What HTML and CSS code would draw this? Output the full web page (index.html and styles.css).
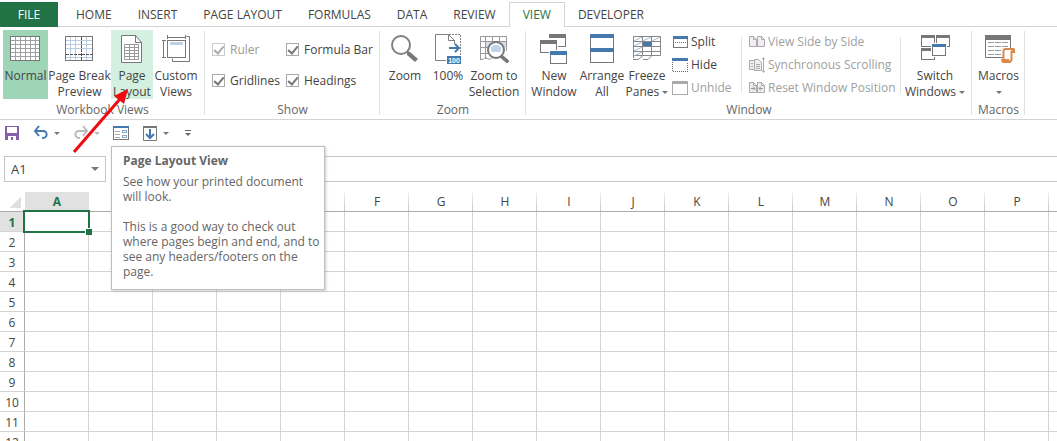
FILE: index.html
```html
<!DOCTYPE html>
<html lang="en">
<head>
	<meta charset="utf-8">
	<title>Book1 - Excel</title>
	<link rel="stylesheet" href="styles.css">
</head>
<body>
	<nav class="tabs">
		<a class="tab file" href="#">FILE</a>
		<a class="tab" href="#">HOME</a>
		<a class="tab" href="#">INSERT</a>
		<a class="tab" href="#">PAGE LAYOUT</a>
		<a class="tab" href="#">FORMULAS</a>
		<a class="tab" href="#">DATA</a>
		<a class="tab" href="#">REVIEW</a>
		<a class="tab active" href="#">VIEW</a>
		<a class="tab" href="#">DEVELOPER</a>
	</nav>

	<div class="ribbon">
		<section class="group views">
			<div class="tools">
				<button class="big selected"><svg width="33" height="32" viewBox="0 0 33 32" shape-rendering="crispEdges"><rect x="1" y="2" width="30" height="25" fill="#fff"/><path d="M6.500 3v23M11.500 3v23M16.500 3v23M21.500 3v23M26.500 3v23M2 6.500h28M2 10.500h28M2 14.500h28M2 18.500h28M2 22.500h28" stroke="#a0a0a0"/><rect x="1.500" y="2.500" width="29" height="24" fill="none" stroke="#777"/></svg>
					<span>Normal</span></button>
				<button class="big w-l"><svg width="31" height="32" viewBox="0 0 31 32" shape-rendering="crispEdges"><path d="M6.500 3v23M11.500 3v23M22.500 3v23M2 6.500h26M2 10.500h26M2 14.500h26M2 23.500h26" stroke="#b9cde0"/><rect x="1.500" y="2.500" width="27" height="24" fill="none" stroke="#777"/><path d="M17.500 3v24M2 20.500h27" stroke="#555" stroke-dasharray="3 1"/></svg>
					<span>Page Break<br>Preview</span></button>
				<button class="big hover w-s"><svg width="32" height="32" viewBox="0 0 32 32"><path d="M5.500 1.500h14l6 7v20h-20z" fill="#fff" stroke="#777"/><path d="M19.500 1.500v7h6" fill="none" stroke="#777"/><path d="M8.500 10.500h14v15h-14zM13.500 10.500v15M18.500 10.500v15M8.500 13.500h14M8.500 16.500h14M8.500 19.500h14M8.500 22.500h14" fill="none" stroke="#999"/></svg>
					<span>Page<br>Layout</span></button>
				<button class="big w-s"><svg width="32" height="32" viewBox="0 0 32 32"><g fill="none" stroke="#777"><rect x="7.500" y="6.500" width="18" height="17"/><path d="M7.500 1v4M25.500 1v4M7.500 3.500h18M2 6.500h4M2 23.500h4M3.500 6.500v17M26.500 2.500h3v25h-17v-3"/></g><path d="M10 8h13v3H10z" fill="#bdd0e6"/></svg>
					<span>Custom<br>Views</span></button>
			</div>
			<h2>Workbook Views</h2>
		</section>

		<section class="group show">
			<div class="tools checks">
				<label class="off"><input type="checkbox" checked disabled>Ruler</label>
				<label><input type="checkbox" checked>Formula Bar</label>
				<label><input type="checkbox" checked>Gridlines</label>
				<label><input type="checkbox" checked>Headings</label>
			</div>
			<h2>Show</h2>
		</section>

		<section class="group zoom">
			<div class="tools">
				<button class="big w-s"><svg width="32" height="32" viewBox="0 0 32 32"><circle cx="12" cy="11" r="9" fill="none" stroke="#808080" stroke-width="2"/><path d="M18 17l3 1 8 7-3 3-8-7z" fill="#777"/></svg>
					<span>Zoom</span></button>
				<button class="big w-s"><svg width="32" height="32" viewBox="0 0 32 32"><path d="M14 26.500H3.500V.5h13l6 6h-6v-6M22.500 6v4" fill="none" stroke="#808080"/><path d="M17 .5h11.500V22" fill="none" stroke="#808080" stroke-dasharray="2 1"/><path d="M17 14h10M23 10l4 4-4 4" fill="none" stroke="#4579ae" stroke-width="2"/><path d="M15 22h14v8H15z" fill="#4579ae"/><text x="22" y="29" text-anchor="middle" class="hundred">100</text></svg>
					<span>100%</span></button>
				<button class="big w-m"><svg width="32" height="32" viewBox="0 0 32 32"><path d="M2.500 25V2.500h26V17M7.500 2.500V25M14.500 2.500v5M21.500 2.500v5M2.500 7.500h26M2.500 13.500h9M2.500 19.500h9M2 25.500h3l2-2 5 2 3-3" fill="none" stroke="#999"/><path d="M8 8h20v5H8z" fill="#cfdeed"/><circle cx="18" cy="16" r="8" fill="#fff" stroke="#777" stroke-width="2"/><path d="M13 17v-4l3-2h4l3 2v4l-2 1h-6z" fill="#bfd3e9"/><path d="M24 21l7 6-2 2-7-6z" fill="#777" stroke="#777"/></svg>
					<span>Zoom to<br>Selection</span></button>
			</div>
			<h2>Zoom</h2>
		</section>

		<section class="group window">
			<div class="tools">
				<button class="big w-m"><svg width="32" height="32" viewBox="0 0 32 32" shape-rendering="crispEdges"><g fill="#fff"><path d="M11.500.5h16v12h-16z" stroke="#777"/><path d="M1 5h19v15H1z"/><path d="M2.500 6.500h16v12h-16z" stroke="#777"/><path d="M11 16h19v15H11z"/><path d="M12.500 17.500h16v12h-16z" stroke="#777"/></g><path d="M11 0h17v4H11zM2 6h17v4H2z" fill="#777"/><path d="M11 4h1v1h-1z" fill="#fff"/><path d="M12 17h17v4H12z" fill="#4579ae"/></svg>
					<span>New<br>Window</span></button>
				<button class="big w-m"><svg width="32" height="32" viewBox="0 0 32 32" shape-rendering="crispEdges"><path d="M4.500 1v27h23V1" fill="#fff" stroke="#777"/><path d="M4 0h24v4H4zM4 14h24v4H4z" fill="#4579ae"/></svg>
					<span>Arrange<br>All</span></button>
				<button class="big w-s"><svg width="32" height="32" viewBox="0 0 32 32"><path d="M2.500 24V2.500h27v19H2M11.500 2.500v19M20.500 2.500v19M2.500 7.500h27M2.500 12.500h27M2.500 17.500h27M2 25.500h5l5-4M12 25.500h5l4-4" fill="none" stroke="#888"/><path d="M3 7l8-4M12 7l8-4M21 7l8-4M3 12l8-4M3 17l8-4M3 22l8-4" stroke="#9bbbdc"/><path d="M12 8h9v4h-9z" fill="#4579ae"/></svg>
					<span>Freeze<br>Panes <i class="caret"></i></span></button>
				<div class="stack">
					<button><svg width="16" height="14" viewBox="0 0 16 14" shape-rendering="crispEdges"><path d="M1.500 1.500h14v11h-14z" fill="#fff" stroke="#777"/><path d="M1 1h15v3H1z" fill="#4579ae"/><path d="M3 7.500h11" stroke="#4579ae" stroke-dasharray="1 1"/></svg>Split</button>
					<button><svg width="16" height="14" viewBox="0 0 16 14" shape-rendering="crispEdges"><path d="M.5 4v9.500h15V4" fill="none" stroke="#666" stroke-dasharray="1 1"/><path d="M0 0h16v3H0z" fill="#4579ae"/></svg>Hide</button>
					<button disabled><svg width="16" height="14" viewBox="0 0 16 14" shape-rendering="crispEdges"><path d="M.5.5h15v13H.5z" fill="none" stroke="#aaa"/><path d="M0 0h16v3H0z" fill="#aaa"/></svg>Unhide</button>
				</div>
				<div class="stack side">
					<button disabled><svg width="16" height="14" viewBox="0 0 16 14"><path d="M.5 1.500h4l3 3v7h-7zM8.500 1.500h4l3 3v7h-7zM4.500 1.500v3h3M12.500 1.500v3h3" fill="#f3ecf3" stroke="#aaa"/></svg>View Side by Side</button>
					<button disabled><svg width="16" height="16" viewBox="0 0 16 16"><path d="M5 3.500H.5v9H5M5.500 2.500h4l3 3v8h-7z" fill="#f3ecf3" stroke="#aaa"/><path d="M2 6.500h2M2 9.500h2M7 7.500h4M7 9.500h4M7 11.500h4M14.500 1v14M13 2.500l1.500-2 1.500 2M13 13.500l1.500 2 1.500-2" fill="none" stroke="#aaa"/></svg>Synchronous Scrolling</button>
					<button disabled><svg width="16" height="14" viewBox="0 0 16 14"><path d="M.5 1.500h4l3 3v7h-7zM8.500 1.500h4l3 3v7h-7zM4.500 1.500v3h3M12.500 1.500v3h3" fill="#f3ecf3" stroke="#aaa"/><path d="M2 7.500h4M4 5.500l2 2-2 2M14 7.500h-4M12 5.500l-2 2 2 2" fill="none" stroke="#999"/></svg>Reset Window Position</button>
				</div>
				<button class="big w-xl"><svg width="32" height="32" viewBox="0 0 32 32" shape-rendering="crispEdges"><g fill="#fff" stroke="#777"><path d="M2.500 1.500h13v11h-13zM17.500 1.500h13v11h-13zM2.500 14.500h13v11h-13z"/></g><path d="M2 1h14v3H2zM17 1h14v3H17zM2 14h11v3H2z" fill="#777"/><path d="M12 9h16v14H12z" fill="#fff"/><path d="M13.500 10.500h13v11h-13z" fill="#fff" stroke="#777"/><path d="M13 10h14v3H13z" fill="#4579ae"/></svg>
					<span>Switch<br>Windows <i class="caret"></i></span></button>
			</div>
			<h2>Window</h2>
		</section>

		<section class="group macros">
			<div class="tools">
				<button class="big"><svg width="34" height="32" viewBox="0 0 34 32"><path d="M3.500 1.500h25v22h-25z" fill="#fff" stroke="#777"/><path d="M3 1h26v5H3z" fill="#777"/><path d="M6 8.500h20M6 12.500h20M6 16.500h13M6 20.500h13" stroke="#999" stroke-dasharray="6 1"/><path d="M21.500 25V17q0-2 2-2h8v3h-2v7q0 3-3 3h-6" fill="#fff" stroke="#db8a4c" stroke-width="2"/><path d="M19 25h8q0 3 2 4H21q-2-1-2-4z" fill="#db8a4c"/><path d="M29 15h4v4h-3z" fill="#db8a4c"/></svg>
					<span>Macros<br><i class="caret"></i></span></button>
			</div>
			<h2>Macros</h2>
		</section>
	</div>

	<div class="quick">
		<button aria-label="Save"><svg width="16" height="16" viewBox="0 0 16 16"><path d="M1 1h14v14H1z" fill="#8560a8"/><path d="M3 2h10v6H3zM4 11h8v4H4z" fill="#fff"/><path d="M7 12h2v3H7z" fill="#8560a8"/></svg></button>
		<button aria-label="Undo"><svg width="16" height="16" viewBox="0 0 16 16"><path d="M2 6h8c5 0 5 7-1 7" fill="none" stroke="#4579ae" stroke-width="2"/><path d="M6 1L2 6l4 5" fill="none" stroke="#4579ae" stroke-width="2"/></svg><i class="caret"></i></button>
		<button aria-label="Redo" disabled><svg width="16" height="16" viewBox="0 0 16 16"><path d="M14 6H6c-5 0-5 7 1 7M10 1l4 5-4 5" fill="none" stroke="#bbb" stroke-width="2"/></svg><i class="caret"></i></button>
		<button aria-label="Form"><svg width="16" height="16" viewBox="0 0 16 16" shape-rendering="crispEdges"><path d="M.5 1.500h15v13H.5z" fill="#fff" stroke="#777"/><path d="M0 1h16v2H0z" fill="#4579ae"/><path d="M2 6.500h5M2 9.500h5M2 12.500h5" stroke="#aaa"/><path d="M9.500 5.500h4v2h-4zM9.500 10.500h4v2h-4z" fill="none" stroke="#8aa9cb"/></svg></button>
		<button aria-label="Sort"><svg width="16" height="16" viewBox="0 0 16 16"><path d="M1.500 1.500h13v14h-13z" fill="#fff" stroke="#777"/><path d="M1 1h14v2H1z" fill="#777"/><path d="M8 4v9M4 9l4 4 4-4" fill="none" stroke="#4579ae" stroke-width="2"/></svg><i class="caret"></i></button>
		<button aria-label="Customize Quick Access Toolbar"><svg width="12" height="8" viewBox="-2 0 12 8"><path d="M1 1.500h6" stroke="#666"/><path d="M1 4h6L4 7z" fill="#666"/></svg></button>
	</div>

	<div class="formula">
		<div class="namebox">
			<input class="name" aria-label="Name Box" value="A1">
			<i class="caret large"></i>
		</div>
		<input class="fx" aria-label="Formula Bar">
	</div>

	<div class="sheet">
		<table>
			<thead><tr id="cols"><th class="corner"></th></tr></thead>
			<tbody id="rows"></tbody>
		</table>
	</div>

	<div class="tip" role="tooltip">
		<h3>Page Layout View</h3>
		<p>See how your printed document will look.</p>
		<p>This is a good way to check out where pages begin and end, and to see any headers/footers on the page.</p>
	</div>
	<svg class="pointer" width="60" height="68" viewBox="0 0 60 68"><path d="M3 65L49 12" stroke="#f00a10" stroke-width="3"/><path d="M57 2l-4 15-10-8z" fill="#f00a10"/></svg>

	<script src="script.js"></script>
</body>
</html>
```
FILE: styles.css
```css
* {
	box-sizing: border-box;
}
body {
	margin: 0;
	height: 100vh;
	overflow: hidden;
	display: flex;
	flex-direction: column;
	position: relative;
	background: #fff;
	color: #444;
	font: 12px/16px "Open Sans", "Noto Sans", sans-serif;
}
button, input {
	font: inherit;
	color: inherit;
	margin: 0;
	padding: 0;
	border: 0;
	background: none;
}
h2, h3, p {
	margin: 0;
	font-size: 12px;
}
svg {
	display: block;
	flex: none;
}

/* tabs */
.tabs {
	display: flex;
	flex: none;
	height: 27px;
	padding-top: 2px;
	border-bottom: 1px solid #d4d4d4;
}
.tab {
	height: 25px;
	padding: 0 13px;
	line-height: 25px;
	color: #444;
	text-decoration: none;
	white-space: nowrap;
}
.file {
	width: 58px;
	margin-right: 5px;
	padding: 0;
	text-align: center;
	background: #217346;
	color: #fff;
}
.active {
	border: 1px solid #d4d4d4;
	border-bottom: 0;
	line-height: 23px;
	background: #fff;
	color: #217346;
}

/* ribbon */
.ribbon {
	display: flex;
	flex: none;
	height: 93px;
	padding-top: 3px;
	border-bottom: 1px solid #d4d4d4;
}
.group {
	position: relative;
	display: flex;
	flex-direction: column;
	flex: none;
	padding-bottom: 1px;
}
.group::after {
	content: "";
	position: absolute;
	right: 0;
	top: 1px;
	bottom: 4px;
	width: 1px;
	background: #e1e1e1;
}
.group h2 {
	text-align: center;
	font-weight: normal;
	color: #666;
}
.tools {
	display: flex;
	height: 72px;
}
.views { width: 205px; }
.views .tools {
	gap: 2px;
	padding-left: 3px;
}
.show { width: 175px; }
.zoom { width: 146px; }
.zoom .tools {
	gap: 1px;
	padding-left: 4px;
}
.window { width: 446px; }
.window .tools { padding-left: 4px; }
.macros { width: 53px; }
.macros .tools { justify-content: center; }

.big {
	display: flex;
	flex-direction: column;
	align-items: center;
	flex: none;
	height: 69px;
	padding-top: 4px;
	white-space: nowrap;
}
.big span {
	margin-top: 2px;
}
.w-s { width: 42px; }
.w-m { width: 48px; }
.w-l { width: 59px; }
.w-xl { width: 68px; }
.selected {
	width: 45px;
	background: #9fd5b7;
}
.hover { background: #d3f0e0; }
.hundred {
	font: bold 7px "Liberation Sans", sans-serif;
	fill: #fff;
}

.checks {
	display: grid;
	grid-template-columns: 74px 90px;
	grid-template-rows: 31px 31px;
	padding: 4px 0 0 7px;
}
.checks label {
	display: flex;
	align-items: center;
	gap: 5px;
	white-space: nowrap;
}
.checks input {
	appearance: none;
	width: 13px;
	height: 13px;
	border: 1px solid #aaa;
	display: flex;
	justify-content: center;
}
.checks input::after {
	content: "";
	width: 4px;
	height: 8px;
	border: solid #777;
	border-width: 0 2px 2px 0;
	transform: rotate(40deg);
}
.off { color: #999; }
.off input { opacity: .6; }

.stack {
	display: flex;
	flex-direction: column;
	width: 69px;
	margin-left: 4px;
}
.stack button {
	display: flex;
	flex: none;
	align-items: center;
	gap: 3px;
	height: 23px;
	white-space: nowrap;
}
.stack button:disabled { color: #a0a0a0; }
.side {
	width: 160px;
	height: 56px;
	margin: 7px 0 0;
	padding-left: 7px;
	border: solid #e1e1e1;
	border-width: 0 1px;
	justify-content: center;
}
.caret {
	display: inline-block;
	vertical-align: middle;
	border: 3px solid transparent;
	border-top-color: #777;
	border-bottom: 0;
}
.large {
	border-width: 4px 4px 0;
}

/* quick access toolbar */
.quick {
	display: flex;
	flex: none;
	align-items: center;
	gap: 13px;
	height: 36px;
	padding: 0 4px 10px;
}
.quick button {
	display: flex;
	align-items: center;
	gap: 5px;
}
.quick button:disabled .caret { opacity: .5; }

/* formula bar */
.formula {
	display: flex;
	flex: none;
	gap: 8px;
	height: 26px;
	margin: 0 0 10px 4px;
}
.namebox {
	display: flex;
	align-items: center;
	justify-content: space-between;
	width: 102px;
	padding: 0 6px;
	border: 1px solid #c6c6c6;
}
.name {
	width: 70px;
	font-size: 13px;
}
.fx {
	flex: 1;
	border: solid #c6c6c6;
	border-width: 1px 0 1px 1px;
}

/* grid */
.sheet {
	flex: 1;
	min-height: 0;
	overflow: hidden;
}
table {
	table-layout: fixed;
	width: 1113px;
	border-spacing: 0;
}
th, td {
	width: 64px;
	height: 20px;
	padding: 0;
	border: solid #d4d4d4;
	border-width: 0 1px 1px 0;
	font-weight: normal;
	line-height: 19px;
}
thead th {
	border-right: 0;
	border-bottom-color: #ababab;
	background: linear-gradient(#f0f0f0, #c6c6c6) right / 1px 100% no-repeat;
}
th:first-child {
	width: 25px;
}
tbody th {
	padding-top: 2px;
	border-right-color: #ababab;
	line-height: 17px;
}
thead .corner {
	background: linear-gradient(135deg, transparent 50%, #dfdfdf 50%) 9px 4px / 12px 12px no-repeat;
}
thead .on, tbody .on {
	background: #e1e1e1;
	color: #217346;
	font-weight: bold;
}
.cell-on {
	position: relative;
}
.cell-on::before {
	content: "";
	position: absolute;
	inset: -2px;
	border: 2px solid #217346;
}
.cell-on::after {
	content: "";
	position: absolute;
	right: -4px;
	bottom: -4px;
	width: 6px;
	height: 6px;
	border: solid #fff;
	border-width: 1px 0 0 1px;
	background: #217346;
}

/* tooltip and arrow */
.tip {
	position: absolute;
	left: 111px;
	top: 146px;
	width: 214px;
	padding: 6px 2px 10px 11px;
	border: 1px solid #bebebe;
	box-shadow: 1px 1px 3px rgba(0, 0, 0, .2);
	background: #fff;
	color: #666;
	line-height: 15px;
}
.tip h3 {
	margin-bottom: 6px;
}
.tip p + p {
	margin-top: 15px;
}
.pointer {
	position: absolute;
	left: 71px;
	top: 87px;
}
```
FILE: script.js
```javascript
var cols = document.getElementById('cols');
var rows = document.getElementById('rows');
var letters = 'ABCDEFGHIJKLMNOP';

for (var i = 0; i <= letters.length; i++) {
	var th = document.createElement('th');
	th.textContent = letters.charAt(i);
	if (i == 0) th.className = 'on';
	cols.appendChild(th);
}

for (var r = 1; r <= 12; r++) {
	var tr = rows.insertRow();
	var head = document.createElement('th');
	head.textContent = r;
	if (r == 1) head.className = 'on';
	tr.appendChild(head);
	for (var c = 0; c <= letters.length; c++) {
		var td = tr.insertCell();
		if (r == 1 && c == 0) td.className = 'cell-on';
	}
}
```
